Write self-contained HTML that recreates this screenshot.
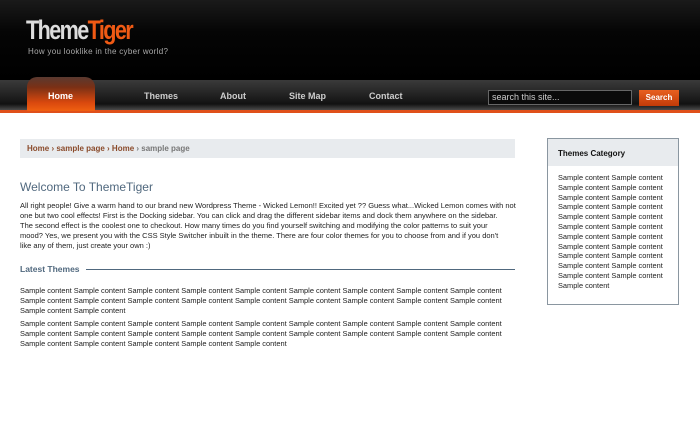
<!DOCTYPE html>
<html><head><style>
*{margin:0;padding:0;box-sizing:border-box}
body{width:700px;height:431px;background:#fff;font-family:"Liberation Sans",sans-serif;position:relative;overflow:hidden}
.hdr{position:absolute;left:0;top:0;width:700px;height:80px;background:linear-gradient(#1a1a1a,#050505 40%,#000)}
.logo{position:absolute;left:26px;top:15px;font-size:27px;font-weight:bold;letter-spacing:-2px;transform:scaleX(0.8);transform-origin:left;color:#ddd}
.logo span{color:#f05a14}
.tag{position:absolute;left:28px;top:47px;font-size:8px;color:#aaa;letter-spacing:0.3px}
.nav{position:absolute;left:0;top:80px;width:700px;height:30px;background:linear-gradient(#3a3a3a,#222 50%,#111 80%,#4a4a4a)}
.line{position:absolute;left:0;top:110px;width:700px;height:3px;background:#e0501a}
.home{position:absolute;left:27px;top:77px;width:68px;height:34px;border-radius:10px 10px 0 0;background:linear-gradient(#5a3a30,#7a3015 30%,#d9480e 75%,#f06010)}
.ni{position:absolute;top:91px;font-size:9px;font-weight:bold;color:#ccc}
.srch{position:absolute;left:488px;top:90px;width:144px;height:15px;border:1px solid #666;background:#0a0a0a;color:#ccc;font-size:9px;padding:1px 3px}
.btn{position:absolute;left:639px;top:90px;width:40px;height:16px;background:linear-gradient(#e86020,#c03a08);color:#fff;font-size:8px;font-weight:bold;text-align:center;line-height:16px}
.bc{position:absolute;left:20px;top:139px;width:495px;height:19px;background:#e8ebee;font-size:8px;font-weight:bold;color:#8a4a2a;padding:5px 7px}
.bc i{font-style:normal;color:#777}
h1{position:absolute;left:20px;top:180px;font-size:12px;font-weight:normal;color:#50687e}
.p{position:absolute;left:20px;top:201px;width:507px;font-size:7.5px;line-height:10px;color:#222;white-space:nowrap}
.lt{position:absolute;left:20px;top:264px;font-size:8.5px;font-weight:bold;color:#50687e;background:#fff;padding-right:4px}
.hr{position:absolute;left:86px;top:269px;width:429px;height:1px;background:#50687e}
.box{position:absolute;left:547px;top:138px;width:132px;height:167px;border:1px solid #8a96a0}
.bh{height:27px;background:#e8ebee;font-size:8px;font-weight:bold;color:#111;padding:10px 10px}
.bt{padding:7px 10px;font-size:7.4px;line-height:9.8px;color:#222}
</style></head><body>
<div class="hdr"></div>
<div class="logo">Theme<span>Tiger</span></div>
<div class="tag">How you looklike in the cyber world?</div>
<div class="nav"></div>
<div class="line"></div>
<div class="home"></div>
<div class="ni" style="left:48px;color:#fff">Home</div>
<div class="ni" style="left:144px">Themes</div>
<div class="ni" style="left:220px">About</div>
<div class="ni" style="left:289px">Site Map</div>
<div class="ni" style="left:369px">Contact</div>
<div class="srch">search this site...</div>
<div class="btn">Search</div>
<div class="bc">Home › sample page › Home <i>› sample page</i></div>
<h1>Welcome To ThemeTiger</h1>
<div class="p">All right people! Give a warm hand to our brand new Wordpress Theme - Wicked Lemon!! Excited yet ?? Guess what...Wicked Lemon comes with not<br>one but two cool effects! First is the Docking sidebar. You can click and drag the different sidebar items and dock them anywhere on the sidebar.<br>The second effect is the coolest one to checkout. How many times do you find yourself switching and modifying the color patterns to suit your<br>mood? Yes, we present you with the CSS Style Switcher inbuilt in the theme. There are four color themes for you to choose from and if you don't<br>like any of them, just create your own :)</div>
<div class="hr"></div>
<div class="lt">Latest Themes</div>
<div class="p" style="top:286px;font-size:7.45px">Sample content Sample content Sample content Sample content Sample content Sample content Sample content Sample content Sample content<br>Sample content Sample content Sample content Sample content Sample content Sample content Sample content Sample content Sample content<br>Sample content Sample content</div>
<div class="p" style="top:319px;font-size:7.45px">Sample content Sample content Sample content Sample content Sample content Sample content Sample content Sample content Sample content<br>Sample content Sample content Sample content Sample content Sample content Sample content Sample content Sample content Sample content<br>Sample content Sample content Sample content Sample content Sample content</div>
<div class="box"><div class="bh">Themes Category</div><div class="bt">Sample content Sample content<br>Sample content Sample content<br>Sample content Sample content<br>Sample content Sample content<br>Sample content Sample content<br>Sample content Sample content<br>Sample content Sample content<br>Sample content Sample content<br>Sample content Sample content<br>Sample content Sample content<br>Sample content Sample content<br>Sample content</div></div>
</body></html>
